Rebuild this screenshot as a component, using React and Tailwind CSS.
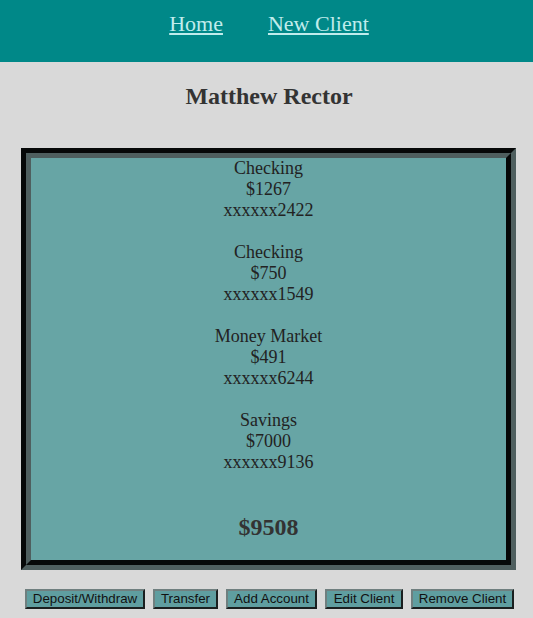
import React from 'react';

const accounts = [
    { type: 'Checking', balance: 1267, number: 'xxxxxx2422' },
    { type: 'Checking', balance: 750, number: 'xxxxxx1549' },
    { type: 'Money Market', balance: 491, number: 'xxxxxx6244' },
    { type: 'Savings', balance: 7000, number: 'xxxxxx9136' },
];

const actions = [
    { label: 'Deposit/Withdraw', w: 'w-[120px]' },
    { label: 'Transfer', w: 'w-[65px]' },
    { label: 'Add Account', w: 'w-[91px]' },
    { label: 'Edit Client', w: 'w-[78px]' },
    { label: 'Remove Client', w: 'w-[103px]' },
];

export default function App() {
    const total = accounts.reduce((sum, a) => sum + a.balance, 0);

    return (
        <div className="min-h-[618px] bg-[#d9d9d9] font-['Liberation_Serif',serif] text-[#222]">
            <nav className="h-[62px] bg-[#008888] flex justify-center gap-[45px] pt-[11px] pl-[5px]">
                <a href="#" className="text-[22px] leading-[26px] text-[#c0ecec] underline underline-offset-[2px]">Home</a>
                <a href="#" className="text-[22px] leading-[26px] text-[#c0ecec] underline underline-offset-[2px]">New Client</a>
            </nav>

            <h2 className="text-center text-[24px] leading-[28px] font-bold text-[#333] mt-[20px] mb-[38px] pl-[5px]">Matthew Rector</h2>

            <div className="ml-[21px] w-[495px] border-[5px] border-t-[#060808] border-l-[#060808] border-b-[#4f5f5f] border-r-[#4f5f5f]">
                <div className="border-[5px] border-t-[#4f5f5f] border-l-[#4f5f5f] border-b-[#060808] border-r-[#060808] bg-[#67a5a5] text-center text-[18px] leading-[21px]">
                    {accounts.map((a, i) => (
                        <div key={i} className="mb-[21px]">
                            <div>{a.type}</div>
                            <div>${a.balance}</div>
                            <div>{a.number}</div>
                        </div>
                    ))}
                    <div className="pt-[19px] pb-[19px] text-[24px] leading-[28px] font-bold text-[#333]">${total}</div>
                </div>
            </div>

            <div className="flex gap-[8px] ml-[25px] mt-[19px] font-['Liberation_Sans',sans-serif]">
                {actions.map((b) => (
                    <button
                        key={b.label}
                        className={`${b.w} h-[20px] bg-[#5f9ea0] text-[13.33px] leading-[16px] text-[#111] border-2 border-t-[#6f7f7f] border-l-[#6f7f7f] border-b-[#1a1f1f] border-r-[#1a1f1f] text-center p-0`}
                    >
                        {b.label}
                    </button>
                ))}
            </div>
        </div>
    );
}
